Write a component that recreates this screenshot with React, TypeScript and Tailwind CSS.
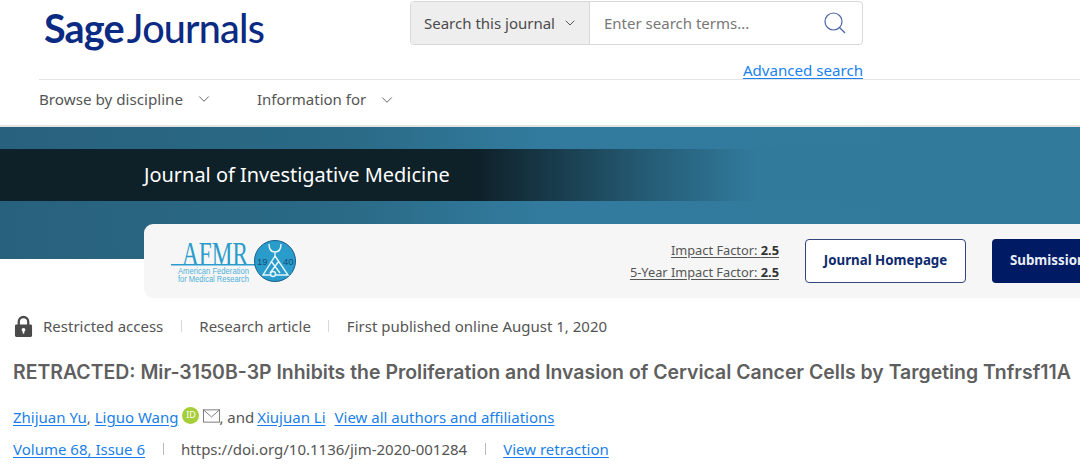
import { ChevronDown } from "lucide-react";

const body = "font-['Noto_Sans','Open_Sans',sans-serif]";
const link = "text-[#1a7fe8] underline underline-offset-2";

const Nav = ({ label, className }: { label: string; className?: string }) => (
  <div className={`flex items-center gap-[12px] ${className ?? ""}`}>
    <span>{label}</span>
    <ChevronDown className="h-[18px] w-[18px] text-[#444]" strokeWidth={1.1} />
  </div>
);

const AfmrLogo = () => (
  <svg viewBox="0 0 127 45" className="h-[45px] w-[127px]">
    <text
      x="12"
      y="25.5"
      fontSize="34"
      fill="#2a9ccb"
      fontFamily="Liberation Serif"
      textLength="66"
      lengthAdjust="spacingAndGlyphs"
    >
      AFMR
    </text>
    <rect x="1" y="25" width="85" height="1.5" fill="#2a9ccb" />
    <text x="8" y="35" fontSize="8.5" fill="#4fb0d8" fontFamily="Liberation Sans" textLength="71" lengthAdjust="spacingAndGlyphs">
      American Federation
    </text>
    <text x="8" y="43" fontSize="8.5" fill="#4fb0d8" fontFamily="Liberation Sans" textLength="71" lengthAdjust="spacingAndGlyphs">
      for Medical Research
    </text>
    <circle cx="105" cy="22" r="20.5" fill="#2a9ccb" stroke="#155f8c" strokeWidth="1" />
    <path
      d="M99 5c0 6 3 8 6 8s6-2 6-8M105 13v6M105 17 93 36h25L105 17M101 22l9 12M109 22l-9 12"
      fill="none"
      stroke="#e6f6fc"
      strokeWidth="1.4"
    />
    <circle cx="103" cy="35" r="2.5" fill="#2a9ccb" stroke="#e6f6fc" strokeWidth="1.4" />
    <text x="87" y="26" fontSize="9.5" fill="#12507a" fontFamily="Liberation Sans">19</text>
    <text x="113" y="26" fontSize="9.5" fill="#12507a" fontFamily="Liberation Sans">40</text>
  </svg>
);

const LockIcon = () => (
  <svg viewBox="0 0 20 24" className="h-[23px] w-[19px]">
    <path d="M5 11V7a5 5 0 0 1 10 0v4" fill="none" stroke="#4a4a4a" strokeWidth="2.4" />
    <rect x="1" y="10" width="18" height="13" rx="1.5" fill="#4a4a4a" />
    <circle cx="10" cy="15.5" r="2" fill="#fff" />
    <rect x="9.2" y="16" width="1.6" height="3.5" fill="#fff" />
  </svg>
);

const SearchIcon = () => (
  <svg viewBox="0 0 22 22" className="h-[22px] w-[22px]" fill="none" stroke="#4a63a8" strokeWidth="1.2">
    <circle cx="9.5" cy="9.5" r="8.5" />
    <path d="M15.5 15.5 21 21" />
  </svg>
);

const MailIcon = () => (
  <svg viewBox="0 0 18 14" className="mb-[2px] ml-[4px] h-[14px] w-[17px]" fill="none" stroke="#777" strokeWidth="1">
    <rect x="0.5" y="0.5" width="17" height="13" />
    <path d="M0.5 0.5 9 8l8.5-7.5" />
  </svg>
);

export default function App() {
  return (
    <div className={`h-[469px] w-[1080px] overflow-hidden bg-white text-[#4a4a4a] ${body}`}>
      <header className="h-[127px] border-b-2 border-[#e4e4e4] pl-[39px]">
        <div className="flex h-[80px] border-b border-[#e4e4e4]">
          <div className="w-[371px] pt-[5px] pl-[5px] font-['Lato',sans-serif] text-[39.5px] leading-[46px] text-[#0b2a83] tracking-[-0.8px] whitespace-nowrap">
            <span className="font-bold">Sage</span>
            <span className="ml-[3px] font-medium">Journals</span>
          </div>
          <div className="w-[453px] pt-[1px]">
            <div className="flex h-[44px] overflow-hidden rounded-[4px] border border-[#d8d8d8]">
              <div className="flex w-[179px] items-center gap-[7px] border-r border-[#d8d8d8] bg-[#eeeeee] pl-[13px] text-[15px] whitespace-nowrap">
                Search this journal
                <ChevronDown className="h-[16px] w-[16px]" strokeWidth={1.4} />
              </div>
              <div className="flex flex-1 items-center justify-between pl-[14px] pr-[16px] text-[15px] text-[#777]">
                Enter search terms...
                <SearchIcon />
              </div>
            </div>
            <div className="mt-[15px] text-right text-[15.1px] leading-[20px]">
              <a className="text-[#1a82f0] underline underline-offset-2">Advanced search</a>
            </div>
          </div>
        </div>
        <div className="flex h-[39px] items-center text-[15.2px] text-[#555]">
          <Nav label="Browse by discipline" className="w-[218px]" />
          <Nav label="Information for" className="text-[15px]" />
        </div>
      </header>

      <section className="relative h-[132px] bg-[linear-gradient(90deg,#28617d_0%,#2a6a86_32%,#327b9e_50%,#317a9c_100%)] pt-[22px]">
        <div className="flex h-[52px] items-center bg-[linear-gradient(90deg,#0e2028_0%,#0e2028_44%,#255c75_60%,#317a9c_70%)] pl-[144px] text-[19.95px] text-white">
          Journal of Investigative Medicine
        </div>
      </section>

      <div className="-mt-[35px] relative ml-[144px] flex h-[74px] w-[1000px] items-center rounded-[9px] bg-[#f6f6f6] pl-[26px]">
        <AfmrLogo />
        <div className="ml-auto mr-[26px] text-right text-[12.8px] leading-[22px] whitespace-nowrap text-[#555]">
          <div className="underline underline-offset-2">
            Impact Factor: <b className="text-[#333]">2.5</b>
          </div>
          <div className="underline underline-offset-2">
            5-Year Impact Factor: <b className="text-[#333]">2.5</b>
          </div>
        </div>
        <button className="h-[44px] w-[161px] rounded-[4px] border border-[#33457f] bg-white text-[13.3px] font-bold text-[#0e2a6e]">
          Journal Homepage
        </button>
        <button className="ml-[26px] h-[44px] w-[152px] rounded-[4px] bg-[#001a63] pl-[18px] text-left text-[13.3px] font-bold whitespace-nowrap text-[#e8edf7]">
          Submissions
        </button>
      </div>

      <main className="pl-[13px] pt-[15px]">
        <div className="flex h-[26px] items-center text-[15px] text-[#555]">
          <span className="ml-[1px]">
            <LockIcon />
          </span>
          <span className="ml-[10px]">Restricted access</span>
          <span className="mx-[17.5px] h-[12px] w-px bg-[#d8d8d8]" />
          <span>Research article</span>
          <span className="mx-[17.5px] h-[12px] w-px bg-[#d8d8d8]" />
          <span>First published online August 1, 2020</span>
        </div>
        <h1 className="mt-[20px] font-['Inter',sans-serif] text-[19.44px] leading-[26px] font-semibold whitespace-nowrap text-[#5f5f5f]">
          RETRACTED: Mir-3150B-3P Inhibits the Proliferation and Invasion of Cervical Cancer Cells by Targeting Tnfrsf11A
        </h1>
        <div className="mt-[21px] flex h-[22px] items-center text-[15px] whitespace-nowrap text-[#555]">
          <a className={link}>Zhijuan Yu</a>
          <span>,&nbsp;</span>
          <a className={link}>Liguo Wang</a>
          <span className="mb-[4px] ml-[4px] flex h-[17px] w-[17px] items-center justify-center rounded-full bg-[#a6ce39] text-[9px] text-white">
            ID
          </span>
          <MailIcon />
          <span className="-ml-[1px] -mr-[1px]">, and&nbsp;</span>
          <a className={link}>Xiujuan Li</a>
          <a className={`${link} ml-[9px]`}>View all authors and affiliations</a>
        </div>
        <div className="mt-[10px] flex h-[22px] items-center text-[15px] whitespace-nowrap text-[#555]">
          <a className={link}>Volume 68, Issue 6</a>
          <span className="mx-[17.5px] h-[12px] w-px bg-[#bbb]" />
          <span>https://doi.org/10.1136/jim-2020-001284</span>
          <span className="mx-[17.5px] h-[12px] w-px bg-[#bbb]" />
          <a className={link}>View retraction</a>
        </div>
      </main>
    </div>
  );
}
